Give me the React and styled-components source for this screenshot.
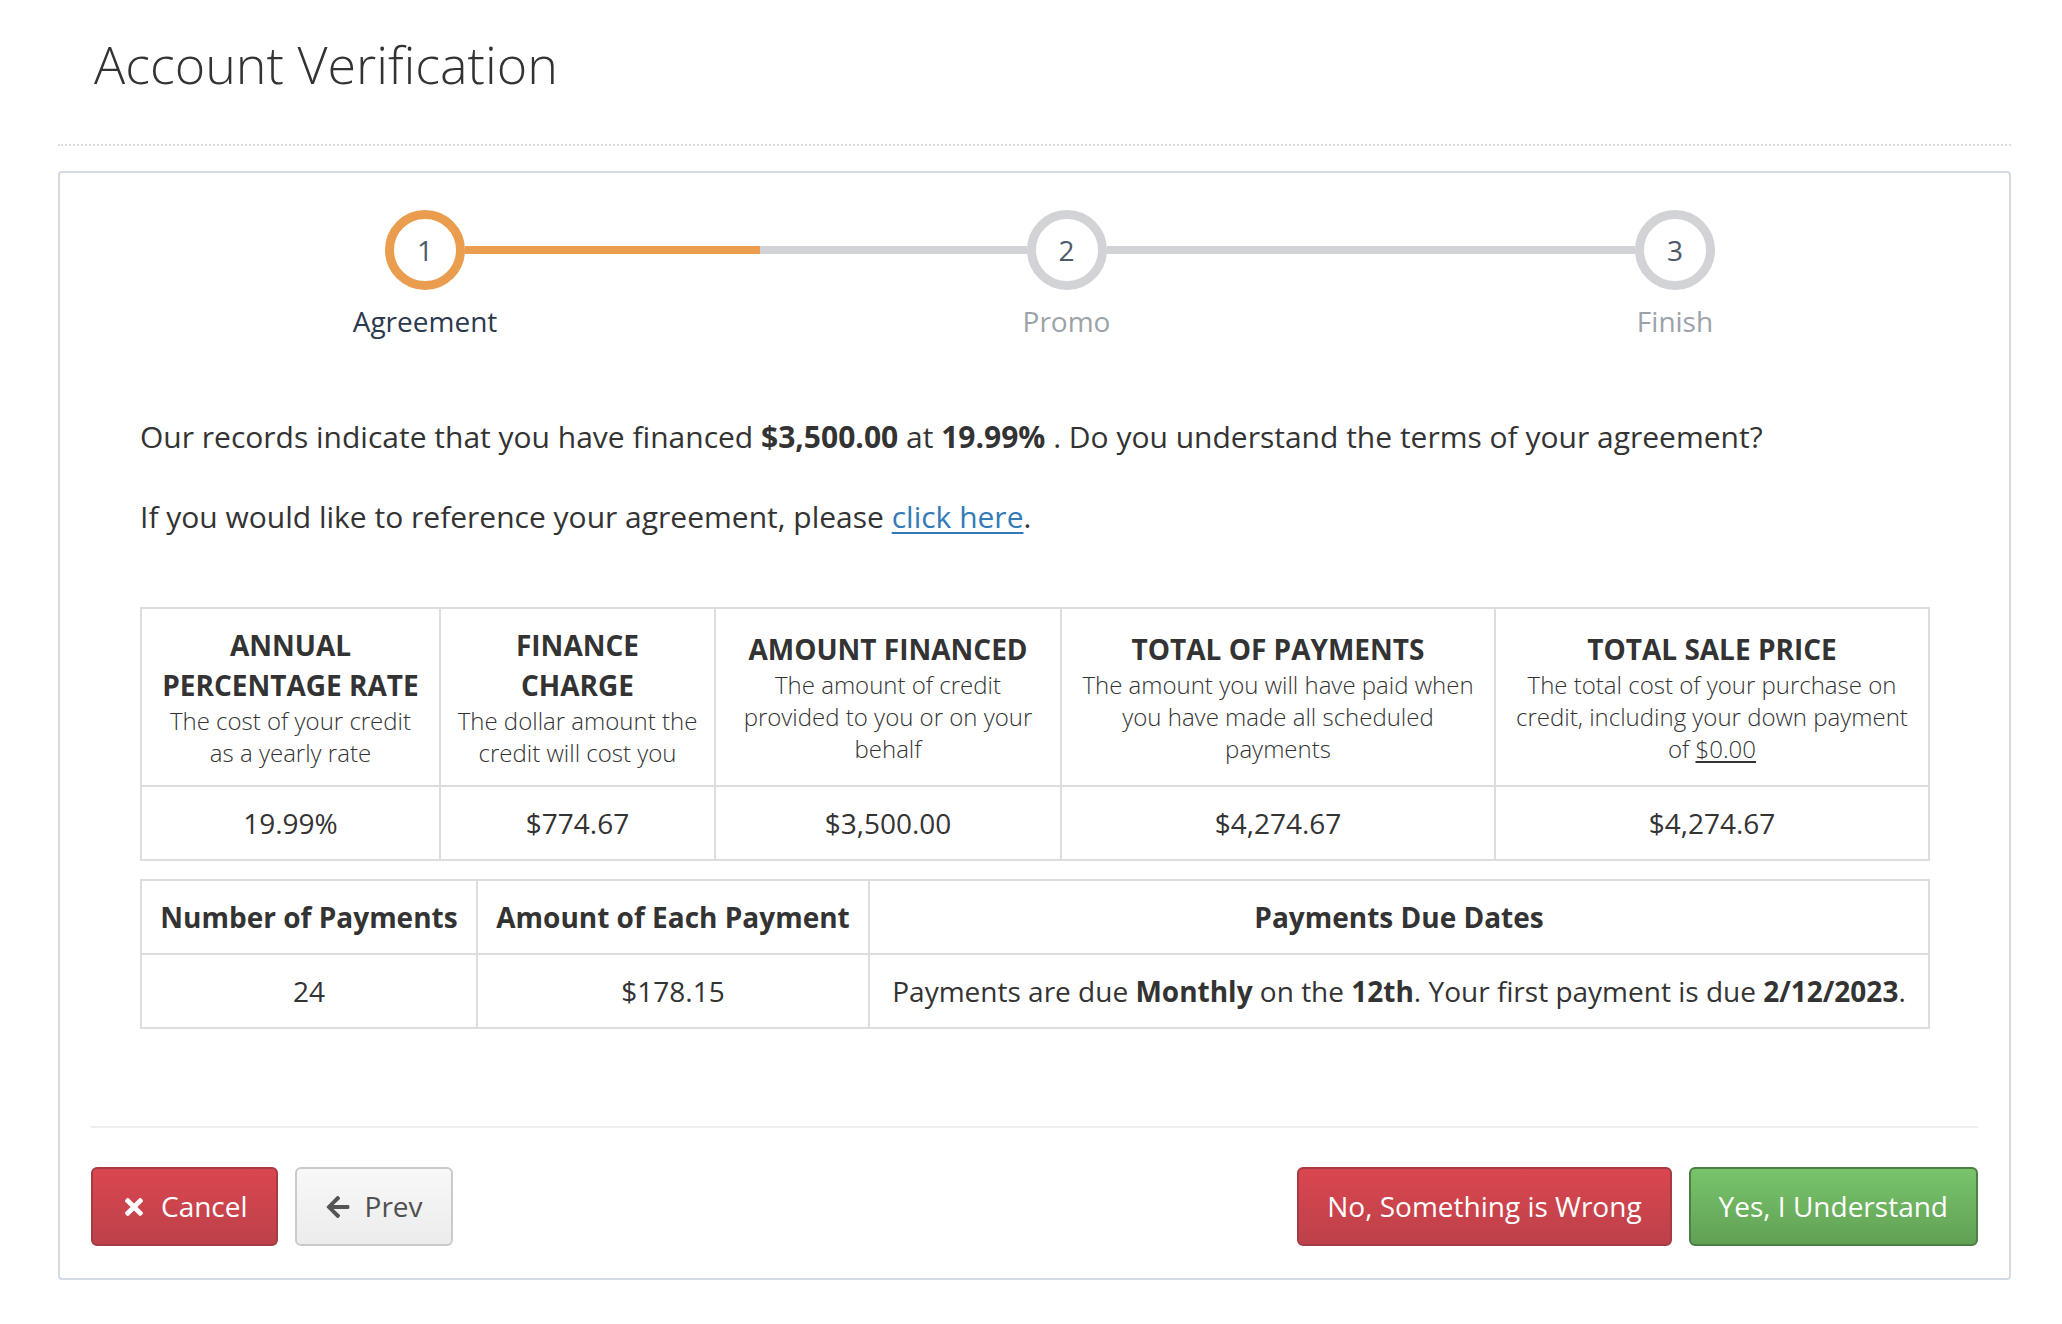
import React from "react";
import styled, { createGlobalStyle } from "styled-components";
import { FaTimes, FaArrowLeft } from "react-icons/fa";

const GlobalStyle = createGlobalStyle`
  html, body { margin: 0; padding: 0; background: #fff; }
  body {
    font-family: "Open Sans", "Liberation Sans", Arial, sans-serif;
    color: #333;
    -webkit-font-smoothing: antialiased;
  }
  * { box-sizing: border-box; }
`;

const Page = styled.div`
  margin-left: 58px;
  width: 1953px;
`;

const Header = styled.div`
  padding: 35px 0 52px 36px;
  border-bottom: 2px dotted #dcdcdc;
`;

const Title = styled.h1`
  margin: 0;
  font-size: 52px;
  line-height: 57px;
  font-weight: 300;
  color: #333;
`;

const Panel = styled.div`
  margin-top: 25px;
  border: 2px solid #d3dae3;
  border-radius: 4px;
  padding: 0 31px 32px;
`;

const Stepper = styled.div`
  display: flex;
  align-items: flex-start;
  padding-top: 37px;
  margin: 0 263px 0 294px;
`;

const Step = styled.div`
  width: 80px;
  flex: 0 0 80px;
  display: flex;
  flex-direction: column;
  align-items: center;
`;

const Circle = styled.div`
  width: 80px;
  height: 80px;
  border-radius: 50%;
  border: 9px solid ${(p) => (p.$active ? "#eb9d4f" : "#d1d3d7")};
  display: flex;
  align-items: center;
  justify-content: center;
  font-size: 28px;
  color: #4e5a6a;
  background: #fff;
`;

const StepLabel = styled.div`
  margin-top: 11px;
  font-size: 28px;
  line-height: 40px;
  white-space: nowrap;
  color: ${(p) => (p.$active ? "#2b3a4e" : "#9ca2a9")};
`;

const Connector = styled.div`
  flex: ${(p) => p.$grow} 1 0;
  height: 8px;
  margin-top: 36px;
  background: ${(p) =>
    p.$done
      ? `linear-gradient(to right, #eb9d4f 0, #eb9d4f ${p.$done}px, #d1d3d7 ${p.$done}px)`
      : "#d1d3d7"};
`;

const Body = styled.div`
  padding: 75px 49px 0;
`;

const Para = styled.p`
  margin: 0 0 ${(p) => p.$mb || 38}px;
  font-size: 30px;
  line-height: 42px;
  color: #333;
  b { font-weight: 700; }
`;

const Link = styled.a`
  color: #337ab7;
  text-decoration: underline;
  text-decoration-thickness: 2px;
  text-underline-offset: 4px;
`;

const Table = styled.table`
  width: 100%;
  table-layout: fixed;
  border-collapse: collapse;
  border: 2px solid #ddd;
  margin-top: ${(p) => p.$mt || 0}px;
`;

const Th = styled.th`
  border: 2px solid #ddd;
  padding: 16px;
  text-align: center;
  vertical-align: middle;
  font-size: 28px;
  line-height: 40px;
  font-weight: 700;
  color: #333;
  white-space: nowrap;
`;

const Desc = styled.span`
  display: block;
  font-size: 24px;
  line-height: 32px;
  font-weight: 300;
  color: #333;
  u { text-underline-offset: 3px; }
`;

const Td = styled.td`
  border: 2px solid #ddd;
  padding: 16px;
  text-align: center;
  vertical-align: middle;
  font-size: 28px;
  line-height: 40px;
  font-weight: 400;
  color: #333;
  white-space: nowrap;
  b { font-weight: 700; }
`;

const Footer = styled.div`
  margin-top: 97px;
  border-top: 2px solid #eceef0;
  padding-top: 39px;
  display: flex;
  justify-content: space-between;
`;

const Group = styled.div`
  display: flex;
  gap: 17px;
`;

const variants = {
  danger: {
    bg: "linear-gradient(to bottom, #da464f 0%, #bd414a 100%)",
    border: "#a53c44",
    color: "#fff",
  },
  success: {
    bg: "linear-gradient(to bottom, #78c46b 0%, #61a155 100%)",
    border: "#4b7f43",
    color: "#fff",
  },
  default: {
    bg: "linear-gradient(to bottom, #f8f8f8 0%, #ececec 100%)",
    border: "#cacaca",
    color: "#505050",
  },
};

const Button = styled.button`
  display: inline-flex;
  align-items: center;
  gap: 14px;
  height: 79px;
  padding: 0 28px;
  border-radius: 6px;
  border: 2px solid ${(p) => variants[p.$variant].border};
  background: ${(p) => variants[p.$variant].bg};
  color: ${(p) => variants[p.$variant].color};
  font-family: "Open Sans", "Liberation Sans", Arial, sans-serif;
  font-size: 28px;
  line-height: 37px;
  font-weight: 400;
  cursor: pointer;
  svg { flex: 0 0 auto; }
`;

const steps = [
  { n: 1, label: "Agreement", active: true },
  { n: 2, label: "Promo" },
  { n: 3, label: "Finish" },
];

export default function App() {
  return (
    <>
      <GlobalStyle />
      <Page>
        <Header>
          <Title>Account Verification</Title>
        </Header>
        <Panel>
          <Stepper>
            <Step>
              <Circle $active>1</Circle>
              <StepLabel $active>{steps[0].label}</StepLabel>
            </Step>
            <Connector $grow={561} $done={295} />
            <Step>
              <Circle>2</Circle>
              <StepLabel>{steps[1].label}</StepLabel>
            </Step>
            <Connector $grow={528} />
            <Step>
              <Circle>3</Circle>
              <StepLabel>{steps[2].label}</StepLabel>
            </Step>
          </Stepper>

          <Body>
            <Para>
              Our records indicate that you have financed <b>$3,500.00</b> at{" "}
              <b>19.99%</b> . Do you understand the terms of your agreement?
            </Para>
            <Para $mb={69}>
              If you would like to reference your agreement, please{" "}
              <Link href="#">click here</Link>.
            </Para>

            <Table>
              <colgroup>
                <col style={{ width: "299px" }} />
                <col style={{ width: "275px" }} />
                <col style={{ width: "346px" }} />
                <col style={{ width: "434px" }} />
                <col style={{ width: "434px" }} />
              </colgroup>
              <thead>
                <tr>
                  <Th>
                    ANNUAL
                    <br />
                    PERCENTAGE RATE
                    <Desc>
                      The cost of your credit
                      <br />
                      as a yearly rate
                    </Desc>
                  </Th>
                  <Th>
                    FINANCE
                    <br />
                    CHARGE
                    <Desc>
                      The dollar amount the
                      <br />
                      credit will cost you
                    </Desc>
                  </Th>
                  <Th>
                    AMOUNT FINANCED
                    <Desc>
                      The amount of credit
                      <br />
                      provided to you or on your
                      <br />
                      behalf
                    </Desc>
                  </Th>
                  <Th>
                    TOTAL OF PAYMENTS
                    <Desc>
                      The amount you will have paid when
                      <br />
                      you have made all scheduled
                      <br />
                      payments
                    </Desc>
                  </Th>
                  <Th>
                    TOTAL SALE PRICE
                    <Desc>
                      The total cost of your purchase on
                      <br />
                      credit, including your down payment
                      <br />
                      of <u>$0.00</u>
                    </Desc>
                  </Th>
                </tr>
              </thead>
              <tbody>
                <tr>
                  <Td>19.99%</Td>
                  <Td>$774.67</Td>
                  <Td>$3,500.00</Td>
                  <Td>$4,274.67</Td>
                  <Td>$4,274.67</Td>
                </tr>
              </tbody>
            </Table>

            <Table $mt={18}>
              <colgroup>
                <col style={{ width: "336px" }} />
                <col style={{ width: "392px" }} />
                <col style={{ width: "1060px" }} />
              </colgroup>
              <thead>
                <tr>
                  <Th>Number of Payments</Th>
                  <Th>Amount of Each Payment</Th>
                  <Th>Payments Due Dates</Th>
                </tr>
              </thead>
              <tbody>
                <tr>
                  <Td>24</Td>
                  <Td>$178.15</Td>
                  <Td>
                    Payments are due <b>Monthly</b> on the <b>12th</b>. Your first
                    payment is due <b>2/12/2023</b>.
                  </Td>
                </tr>
              </tbody>
            </Table>
          </Body>

          <Footer>
            <Group>
              <Button $variant="danger">
                <FaTimes size={26} />
                Cancel
              </Button>
              <Button $variant="default">
                <FaArrowLeft size={26} color="#555" />
                Prev
              </Button>
            </Group>
            <Group>
              <Button $variant="danger">No, Something is Wrong</Button>
              <Button $variant="success">Yes, I Understand</Button>
            </Group>
          </Footer>
        </Panel>
      </Page>
    </>
  );
}
